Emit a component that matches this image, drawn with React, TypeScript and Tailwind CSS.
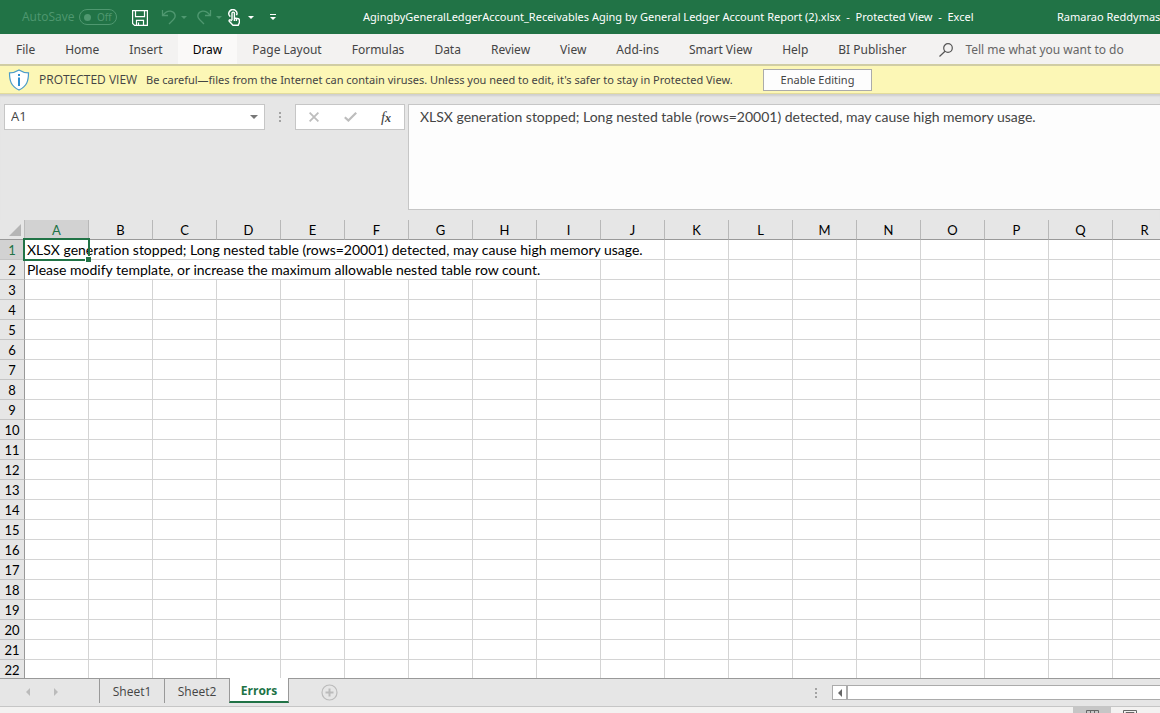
import React from 'react'

const menuTabs = [
  'File', 'Home', 'Insert', 'Draw', 'Page Layout', 'Formulas', 'Data', 'Review',
  'View', 'Add-ins', 'Smart View', 'Help', 'BI Publisher',
]

const columns = 'ABCDEFGHIJKLMNOPQR'.split('')
const rowNumbers = Array.from({ length: 22 }, (_, i) => i + 1)

// text in column A runs over the empty cells beside it
const longCells: Record<number, { text: string; span: number }> = {
  1: {
    text: 'XLSX generation stopped; Long nested table (rows=20001) detected, may cause high memory usage.',
    span: 10,
  },
  2: {
    text: 'Please modify template, or increase the maximum allowable nested table row count.',
    span: 9,
  },
}

function Caret({ className = '' }: { className?: string }) {
  return (
    <svg viewBox="0 0 6 3" className={`h-[3px] w-[6px] shrink-0 ${className}`} fill="currentColor">
      <path d="M0 0h6L3 3z" />
    </svg>
  )
}

function GripDots() {
  return (
    <svg viewBox="0 0 2 10" className="h-[10px] w-[2px] shrink-0" fill="#a3a3a3">
      <path d="M0 0h2v2H0zM0 4h2v2H0zM0 8h2v2H0z" />
    </svg>
  )
}

function TitleBar() {
  return (
    <header className="flex h-[34px] shrink-0 items-center bg-[#217346] pl-[22px] font-['Noto_Sans',sans-serif] text-[11px] text-white">
      <label className="flex w-[110px] shrink-0 items-center gap-[7px] text-[#4f9870]">
        <span className="w-[50px] font-['Open_Sans',sans-serif] text-[12px]">AutoSave</span>
        <button type="button" role="switch" aria-checked="false" aria-label="AutoSave"
          className="flex h-4 w-[38px] shrink-0 items-center gap-[6px] rounded-full border border-[#4f9870] pl-1 text-[10px] leading-none">
          <span className="size-[7px] rounded-full bg-[#4f9870]" />
          Off
        </button>
      </label>
      <button type="button" aria-label="Save" className="shrink-0">
        <svg viewBox="0 0 16 16" className="mt-[2px] size-4" fill="none" stroke="#fff" strokeWidth="1.2">
          <path d="M.6.6h14.8v14.8H2.6l-2-2zM3.5.6v6h9v-6M4.500 15.400v-5h7v5M6.500 15v-2.500" />
        </svg>
      </button>
      <button type="button" aria-label="Undo" className="ml-[13px] flex shrink-0 items-center gap-1 text-[#4f9870]">
        <svg viewBox="0 0 16 16" className="size-4" fill="none" stroke="currentColor" strokeWidth="1.3">
          <path d="M1.500 1v5.500H7M1.800 6.300C4 3.500 6.500 1.800 9.500 2.200c4.800.7 6 5.300 3 8.300L8 15" />
        </svg>
        <Caret />
      </button>
      <button type="button" aria-label="Redo" className="ml-[9px] flex shrink-0 items-center gap-1 text-[#4f9870]">
        <svg viewBox="0 0 16 16" className="size-4" fill="none" stroke="currentColor" strokeWidth="1.3">
          <path d="M14.500 1v5.500H9M14.200 6.300C12 3.500 9.500 1.800 6.500 2.200c-4.800.7-6 5.300-3 8.300L8 15" />
        </svg>
        <Caret />
      </button>
      <button type="button" aria-label="Touch/Mouse Mode" className="ml-[6px] flex shrink-0 items-center gap-[8px]">
        <svg viewBox="0 0 12 17" className="h-[17px] w-3" fill="none" stroke="#fff" strokeWidth="1.4">
          <path d="M2.300 7.600A4 4 0 1 1 8.500 6.300M4 11V4.300a1.200 1.200 0 0 1 2.400 0V9l4 .8c.8.200 1 .8 1 1.400v2.300l-1.200 2.800H5L1.300 12.300c-.6-1 .4-1.900 1.300-1.300L4 12M6.400 9v3M8.400 9.500v2.500" />
        </svg>
        <Caret />
      </button>
      <button type="button" aria-label="Customize Quick Access Toolbar" className="ml-4 shrink-0">
        <svg viewBox="0 0 6 6" className="size-[6px]" fill="#fff">
          <path d="M0 0h6v1H0zM0 3h6L3 6z" />
        </svg>
      </button>
      <h1 className="w-[781px] shrink-0 pl-[87px] whitespace-pre">
        AgingbyGeneralLedgerAccount_Receivables Aging by General Ledger Account Report (2).xlsx  -  Protected View  -  Excel
      </h1>
      <span className="whitespace-nowrap">Ramarao Reddymas</span>
    </header>
  )
}

function RibbonTabs() {
  return (
    <nav className="flex h-[30px] shrink-0 items-stretch bg-[#f3f2f1] pl-[1px] font-['Noto_Sans',sans-serif] text-[12px] text-[#444]">
      {menuTabs.map(tab => (
        <button key={tab} type="button"
          className={`px-[15px] pt-[2px] whitespace-nowrap ${tab === 'Draw' ? 'bg-[#faf9f8] text-black' : ''}`}>
          {tab}
        </button>
      ))}
      <label className="ml-[18px] flex flex-1 items-center gap-3 pt-px">
        <svg viewBox="0 0 14 14" className="size-[14px] shrink-0" fill="none" stroke="#555" strokeWidth="1.200">
          <circle cx="9" cy="5" r="4.300" />
          <path d="M6 8.200.5 13.500" />
        </svg>
        <input aria-label="Tell me what you want to do" placeholder="Tell me what you want to do"
          className="min-w-0 flex-1 bg-transparent outline-none placeholder:text-[#666]" />
      </label>
    </nav>
  )
}

function ProtectedViewBar() {
  return (
    <div className="flex h-[30px] shrink-0 items-center border-t-2 border-b border-t-[#d0cda4] border-b-[#e3dc9c] bg-[#fcf7b6] pl-2 font-['Noto_Sans',sans-serif] text-[11px] text-[#444]">
      <svg viewBox="0 0 22 22" className="size-[22px] shrink-0" fill="none">
        <path d="M11 1c3 2 6 2.800 9.500 2.800 0 8-1.500 13.200-9.500 17.200C3 17 1.500 11.800 1.500 3.800 5 3.800 8 3 11 1z" fill="#fff" stroke="#4a9bc9" strokeWidth="1.200" />
        <path d="M10 5h2v2h-2zM10 8.500h2V17h-2z" fill="#2f8fd0" />
      </svg>
      <strong className="w-[107px] shrink-0 pl-[9px] font-['Open_Sans',sans-serif] text-[12px] font-medium whitespace-nowrap">PROTECTED VIEW</strong>
      <span className="ml-[9px] w-[617px] shrink-0 pt-px whitespace-nowrap">
        Be careful—files from the Internet can contain viruses. Unless you need to edit, it's safer to stay in Protected View.
      </span>
      <button type="button" className="h-[22px] w-[109px] border border-[#ababab] bg-[#fdfdfd] pt-px whitespace-nowrap">
        Enable Editing
      </button>
    </div>
  )
}

function FormulaBar() {
  return (
    <div className="flex h-[126px] shrink-0 items-start bg-[#e6e6e6] pt-[10px] pl-1 text-[#444] shadow-[inset_0_3px_2px_-1px_#cfcfcf]">
      <div className="flex h-[26px] w-[261px] items-center border border-[#c6c6c6] bg-white pr-[6px] pl-[6px]">
        <input aria-label="Name Box" defaultValue="A1" className="min-w-0 flex-1 bg-transparent text-[13px] outline-none" />
        <button type="button" aria-label="Open name list" className="text-[#777]">
          <svg viewBox="0 0 8 4" className="h-1 w-2" fill="currentColor"><path d="M0 0h8L4 4z" /></svg>
        </button>
      </div>
      <div className="flex h-[26px] w-[30px] items-center justify-center">
        <GripDots />
      </div>
      <div className="flex h-[26px] w-[110px] items-center border border-[#c6c6c6] bg-white">
        <button type="button" aria-label="Cancel" className="flex flex-1 justify-center">
          <svg viewBox="0 0 10 10" className="size-[10px]" fill="none" stroke="#bdbdbd" strokeWidth="1.800">
            <path d="M.6.6l8.800 8.800M9.400.6L.6 9.400" />
          </svg>
        </button>
        <button type="button" aria-label="Enter" className="flex flex-1 justify-center">
          <svg viewBox="0 0 13 10" className="h-[10px] w-[13px]" fill="none" stroke="#bdbdbd" strokeWidth="2.200">
            <path d="M.8 5.200l3.600 3.300L12.200.8" />
          </svg>
        </button>
        <button type="button" aria-label="Insert Function" className="flex-1 font-['Liberation_Serif',serif] text-[15px] leading-none italic">
          f<span className="text-[12px] font-bold">x</span>
        </button>
      </div>
      <textarea aria-label="Formula Bar" defaultValue={longCells[1].text}
        className="ml-[3px] h-[106px] min-w-0 flex-1 resize-none border border-r-0 border-[#c6c6c6] bg-[#fdfdfd] px-[11px] py-[2px] font-['Lato',sans-serif] text-[14px] leading-5 outline-none [font-variant-ligatures:none]" />
    </div>
  )
}

function Grid() {
  return (
    <main className="min-h-0 flex-1 overflow-hidden bg-white font-['Lato',sans-serif] text-[14px] text-black [font-variant-ligatures:none]">
      <table className="w-px table-fixed border-separate border-spacing-0">
        <colgroup>
          <col className="w-[25px]" />
          {columns.map(c => <col key={c} className="w-[64px]" />)}
        </colgroup>
        <thead>
          <tr className="h-5">
            <th aria-label="Select all" className="border-r border-b border-r-[#bbb] border-b-[#999] bg-[#e6e6e6] p-0 align-bottom">
              <svg viewBox="0 0 12 12" className="mb-[3px] ml-[9px] size-3" fill="#b5b5b5">
                <path d="M12 0v12H0z" />
              </svg>
            </th>
            {columns.map(c => (
              <th key={c} scope="col"
                className={`border-r border-b border-r-[#b8b8b8] border-b-[#999] p-0 pt-[2px] text-[13px] leading-[17px] font-normal ${c === 'A' ? 'bg-[#d2d2d2] text-[#217346]' : 'bg-[#e6e6e6]'}`}>
                {c}
              </th>
            ))}
          </tr>
        </thead>
        <tbody>
          {rowNumbers.map(n => {
            const long = longCells[n]
            return (
              <tr key={n} className="h-5">
                <th scope="row"
                  className={`border-r border-b border-r-[#999] border-b-[#c4c4c4] p-0 pt-[2px] text-[13px] leading-[17px] font-normal ${n === 1 ? 'bg-[#d2d2d2] text-[#217346]' : 'bg-[#e6e6e6]'}`}>
                  {n}
                </th>
                {long && (
                  <td colSpan={long.span} className="relative border-r border-b border-[#d4d4d4] p-0 pl-[2px] leading-[19px] whitespace-nowrap">
                    {long.text}
                    {n === 1 && (
                      <span className="absolute -top-[2px] -left-[2px] h-[23px] w-[67px] border-2 border-[#217346]">
                        <span className="absolute -right-[3px] -bottom-[3px] size-[6px] border-t border-l border-white bg-[#217346]" />
                      </span>
                    )}
                  </td>
                )}
                {columns.slice(long ? long.span : 0).map(c => (
                  <td key={c} className="border-r border-b border-[#d4d4d4] p-0" />
                ))}
              </tr>
            )
          })}
        </tbody>
      </table>
    </main>
  )
}

function SheetBar() {
  return (
    <div className="flex h-[29px] shrink-0 items-start border-t border-b border-t-[#999] border-b-[#c6c6c6] bg-[#e6e6e6] text-[12px] text-[#444]">
      <div className="flex h-[25px] w-[99px] items-center gap-6 pl-[26px] text-[#bbb]">
        <button type="button" aria-label="Previous sheet">
          <svg viewBox="0 0 4 8" className="h-2 w-1" fill="currentColor"><path d="M4 0v8L0 4z" /></svg>
        </button>
        <button type="button" aria-label="Next sheet">
          <svg viewBox="0 0 4 8" className="h-2 w-1" fill="currentColor"><path d="M0 0v8l4-4z" /></svg>
        </button>
      </div>
      <button type="button" className="h-6 w-[65px] border-l border-[#999] pt-px">Sheet1</button>
      <button type="button" className="h-6 w-[65px] border-l border-[#999] pt-px">Sheet2</button>
      <button type="button" className="-mt-px h-[25px] w-[60px] border-r border-b-2 border-l border-r-[#999] border-b-[#217346] border-l-[#999] bg-white pt-[3px] font-bold text-[#217346]">
        Errors
      </button>
      <button type="button" aria-label="New sheet" className="mt-[5px] ml-8">
        <svg viewBox="0 0 17 17" className="size-[17px]" fill="none" stroke="#bbb" strokeWidth="1.200">
          <circle cx="8.500" cy="8.500" r="7.500" />
          <path d="M8.500 4.500v8M4.500 8.500h8" strokeWidth="2" />
        </svg>
      </button>
      <div className="ml-auto flex h-[27px] w-[345px] items-center">
        <GripDots />
        <button type="button" aria-label="Scroll left" className="ml-[15px] flex h-[15px] w-[15px] items-center justify-center border border-[#ababab] bg-white">
          <svg viewBox="0 0 4 8" className="h-2 w-1" fill="#666"><path d="M4 0v8L0 4z" /></svg>
        </button>
        <div className="h-[15px] flex-1 border border-r-0 border-[#ababab] bg-white" />
      </div>
    </div>
  )
}

function StatusBar() {
  return (
    <footer className="flex h-[6px] shrink-0 justify-end overflow-hidden bg-[#f3f2f1]">
      <button type="button" aria-label="Normal view" className="flex w-[38px] justify-center bg-[#c6c6c6] pt-[3px]">
        <svg viewBox="0 0 13 10" className="h-[10px] w-[13px]" fill="none" stroke="#666">
          <path d="M.5.500h12v9H.5zM4.500.500v9M8.500.500v9" />
        </svg>
      </button>
      <button type="button" aria-label="Page layout view" className="mr-[11px] flex w-[38px] justify-center pt-[3px]">
        <svg viewBox="0 0 14 10" className="h-[10px] w-[14px]" fill="none" stroke="#666">
          <path d="M.5.500h13v9H.5zM3 2.500h8v7H3z" />
        </svg>
      </button>
    </footer>
  )
}

export default function App() {
  return (
    <div className="flex h-screen flex-col overflow-hidden bg-[#e6e6e6] font-['Open_Sans',sans-serif]">
      <TitleBar />
      <RibbonTabs />
      <ProtectedViewBar />
      <FormulaBar />
      <Grid />
      <SheetBar />
      <StatusBar />
    </div>
  )
}
